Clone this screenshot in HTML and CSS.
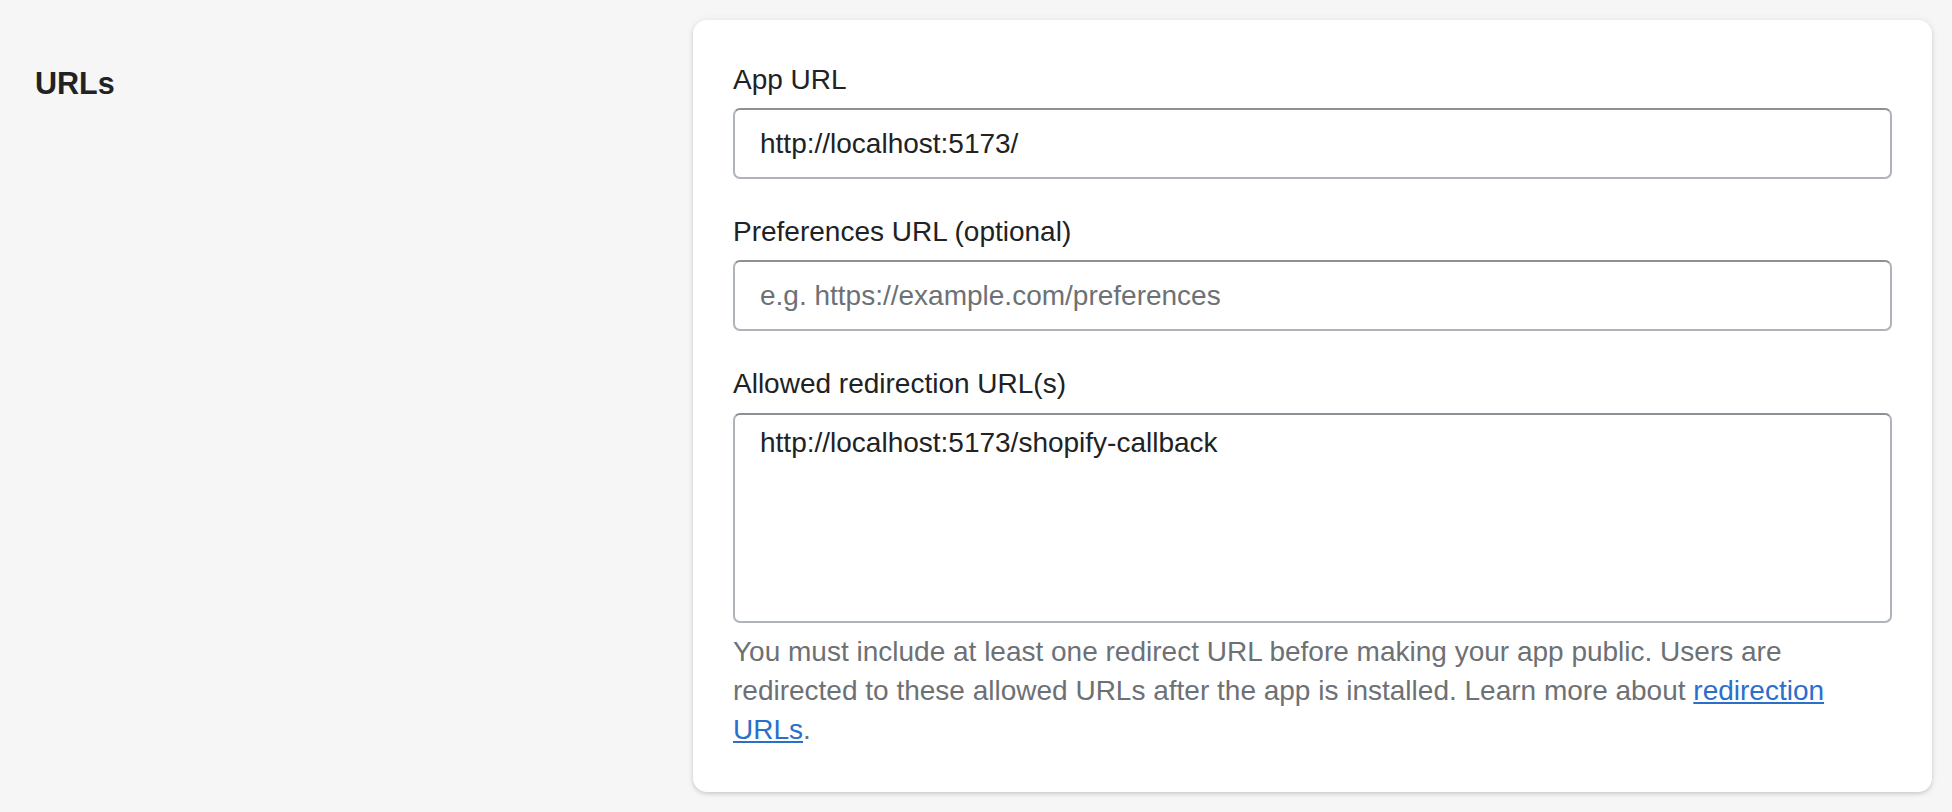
FILE: index.html
```html
<!DOCTYPE html>
<html lang="en">
<head>
<meta charset="utf-8">
<title>URLs</title>
<link rel="stylesheet" href="styles.css">
</head>
<body>
<div class="layout">
  <div class="annotation">
    <h2 class="annotation-title">URLs</h2>
  </div>
  <div class="card">
    <div class="field">
      <label class="label" for="app-url">App URL</label>
      <input class="input" id="app-url" type="text" value="http://localhost:5173/">
    </div>
    <div class="field">
      <label class="label" for="pref-url">Preferences URL (optional)</label>
      <input class="input" id="pref-url" type="text" placeholder="e.g. https://example.com/preferences">
    </div>
    <div class="field">
      <label class="label" for="redirect-urls">Allowed redirection URL(s)</label>
      <textarea class="input textarea" id="redirect-urls">http://localhost:5173/shopify-callback</textarea>
      <p class="help">You must include at least one redirect URL before making your app public. Users are redirected to these allowed URLs after the app is installed. Learn more about <a class="link" href="#">redirection URLs</a>.</p>
    </div>
  </div>
</div>
</body>
</html>
```
FILE: styles.css
```css
* { box-sizing: border-box; }

html, body {
  margin: 0;
  background: #f6f6f7;
  font-family: "Liberation Sans", Arial, sans-serif;
  color: #202223;
}

.layout {
  display: grid;
  grid-template-columns: 653px 1fr;
  column-gap: 20px;
  padding: 20px;
}

.annotation-title {
  margin: 0;
  padding: 42px 0 0 15px;
  font-size: 30.5px;
  line-height: 42px;
  font-weight: 700;
  color: #202223;
}

.card {
  background: #ffffff;
  border-radius: 14px;
  padding: 40px 40px 43px;
  box-shadow: 0 0 9px rgba(23, 24, 24, 0.06), 0 2px 4px rgba(0, 0, 0, 0.14);
}

.field + .field { margin-top: 33px; }

.label {
  display: block;
  font-size: 28px;
  line-height: 39.2px;
  margin-bottom: 9px;
  color: #202223;
}

.input {
  display: block;
  width: 100%;
  height: 71px;
  margin: 0;
  padding: 14px 25px;
  border: 2px solid #aeb4b9;
  border-top-color: #8c9196;
  border-radius: 7px;
  background: #ffffff;
  font-family: "Liberation Sans", Arial, sans-serif;
  font-size: 28px;
  line-height: 39.2px;
  color: #202223;
  outline: none;
}

.input::placeholder { color: #6d7175; opacity: 1; }

.textarea {
  height: 210px;
  resize: none;
  overflow: hidden;
  padding-top: 8px;
}

.help {
  margin: 9px 0 0;
  font-size: 28px;
  line-height: 39.2px;
  color: #6d7175;
}

.link {
  color: #2c6ecb;
  text-decoration: underline;
}
```
